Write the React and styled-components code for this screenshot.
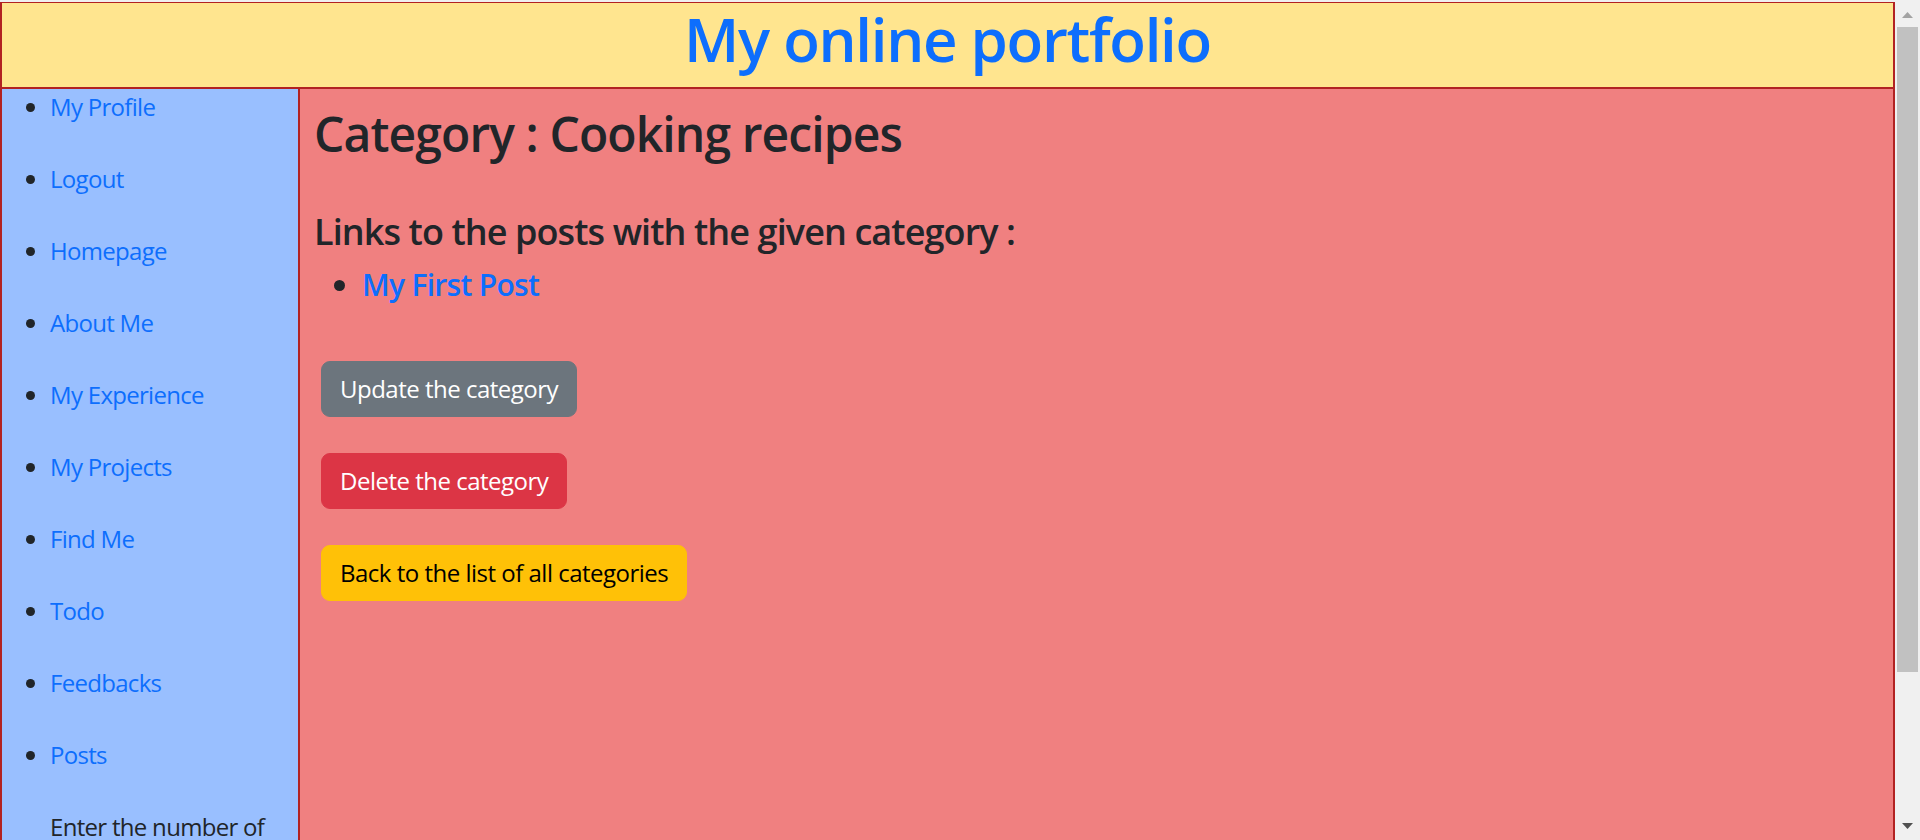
import React from 'react';
import styled, { createGlobalStyle } from 'styled-components';

const GlobalStyle = createGlobalStyle`
  html, body {
    margin: 0;
    padding: 0;
    overflow: hidden;
    background: #f0f0f0;
  }
  body {
    font-family: "Open Sans", "Noto Sans", sans-serif;
    font-size: 24px;
    line-height: 1.5;
    letter-spacing: -0.7px;
    color: #212529;
  }
  * {
    box-sizing: border-box;
  }
`;

const Screen = styled.div`
  display: flex;
  height: 840px;
  overflow: hidden;
`;

const Page = styled.div`
  flex: 1;
  min-width: 0;
  display: flex;
  flex-direction: column;
  padding-top: 2px;
`;

const Header = styled.header`
  height: 87px;
  flex-shrink: 0;
  background: #ffe58f;
  border: 2px solid #b22222;
  border-top-width: 1px;
`;

const Title = styled.h1`
  margin: 0 0 12px;
  font-size: 60px;
  font-weight: 600;
  letter-spacing: -1.3px;
  line-height: 72px;
  text-align: center;
  color: #0d6efd;
`;

const Body = styled.div`
  flex: 1;
  display: flex;
  min-height: 0;
`;

const Sidebar = styled.nav`
  width: 300px;
  flex-shrink: 0;
  background: #99bfff;
  border-left: 2px solid #b22222;
  border-right: 2px solid #b22222;
`;

const NavList = styled.ul`
  margin: 0;
  padding: 0 0 0 48px;
`;

const NavItem = styled.li`
  line-height: 36px;
  margin-bottom: 36px;
  list-style: ${(p) => (p.plain ? 'none' : 'disc')};
`;

const Link = styled.a`
  color: #0d6efd;
  text-decoration: none;
`;

const Main = styled.main`
  flex: 1;
  background: #f08080;
  border-right: 2px solid #b22222;
  padding: 16px 14px;
`;

const Heading = styled.h2`
  margin: 0 0 12px;
  font-size: 48px;
  font-weight: 600;
  letter-spacing: -0.9px;
  line-height: 1.2;
`;

const SubHeading = styled.h4`
  margin: 47px 0 14px;
  font-size: 36px;
  font-weight: 600;
  letter-spacing: -0.9px;
  line-height: 1.2;
`;

const PostList = styled.ul`
  margin: 0 0 58px;
  padding-left: 48px;
`;

const PostItem = styled.li`
  font-size: 30px;
  font-weight: 600;
  letter-spacing: -0.7px;
  line-height: 36px;
`;

const buttonColors = {
  secondary: { bg: '#6c757d', fg: '#fff' },
  danger: { bg: '#dc3545', fg: '#fff' },
  warning: { bg: '#ffc107', fg: '#000' },
};

const Button = styled.button`
  display: block;
  margin: 0 0 36px 7px;
  padding: 9px 18px;
  font-family: inherit;
  font-size: 24px;
  letter-spacing: -0.5px;
  line-height: 36px;
  border: 1px solid ${(p) => buttonColors[p.variant].bg};
  border-radius: 9px;
  background: ${(p) => buttonColors[p.variant].bg};
  color: ${(p) => buttonColors[p.variant].fg};
  cursor: pointer;
`;

const Scrollbar = styled.div`
  width: 25px;
  flex-shrink: 0;
  display: flex;
  flex-direction: column;
  background: #f0f0f0;
`;

const Arrow = styled.div`
  height: 26px;
  display: flex;
  align-items: center;
  justify-content: center;
  padding-top: ${(p) => (p.down ? '0' : '3px')};
  padding-bottom: ${(p) => (p.down ? '2px' : '0')};
`;

const Track = styled.div`
  flex: 1;
  padding: 1px 2px 0 2px;
`;

const Thumb = styled.div`
  height: 645px;
  background: #c1c1c1;
`;

const navLinks = [
  'My Profile',
  'Logout',
  'Homepage',
  'About Me',
  'My Experience',
  'My Projects',
  'Find Me',
  'Todo',
  'Feedbacks',
  'Posts',
];

function App() {
  return (
    <>
      <GlobalStyle />
      <Screen>
        <Page>
          <Header>
            <Title>My online portfolio</Title>
          </Header>
          <Body>
            <Sidebar>
              <NavList>
                {navLinks.map((label) => (
                  <NavItem key={label}>
                    <Link href='#'>{label}</Link>
                  </NavItem>
                ))}
                <NavItem plain>
                  Enter the number of posts to display :
                </NavItem>
              </NavList>
            </Sidebar>
            <Main>
              <Heading>Category : Cooking recipes</Heading>
              <SubHeading>Links to the posts with the given category :</SubHeading>
              <PostList>
                <PostItem>
                  <Link href='#'>My First Post</Link>
                </PostItem>
              </PostList>
              <Button variant='secondary'>Update the category</Button>
              <Button variant='danger'>Delete the category</Button>
              <Button variant='warning'>Back to the list of all categories</Button>
            </Main>
          </Body>
        </Page>
        <Scrollbar>
          <Arrow>
            <svg width='11' height='6' viewBox='0 0 11 6'>
              <polygon points='5.5,0 11,6 0,6' fill='#a3a3a3' />
            </svg>
          </Arrow>
          <Track>
            <Thumb />
          </Track>
          <Arrow down>
            <svg width='11' height='6' viewBox='0 0 11 6'>
              <polygon points='0,0 11,0 5.5,6' fill='#505050' />
            </svg>
          </Arrow>
        </Scrollbar>
      </Screen>
    </>
  );
}

export default App;
